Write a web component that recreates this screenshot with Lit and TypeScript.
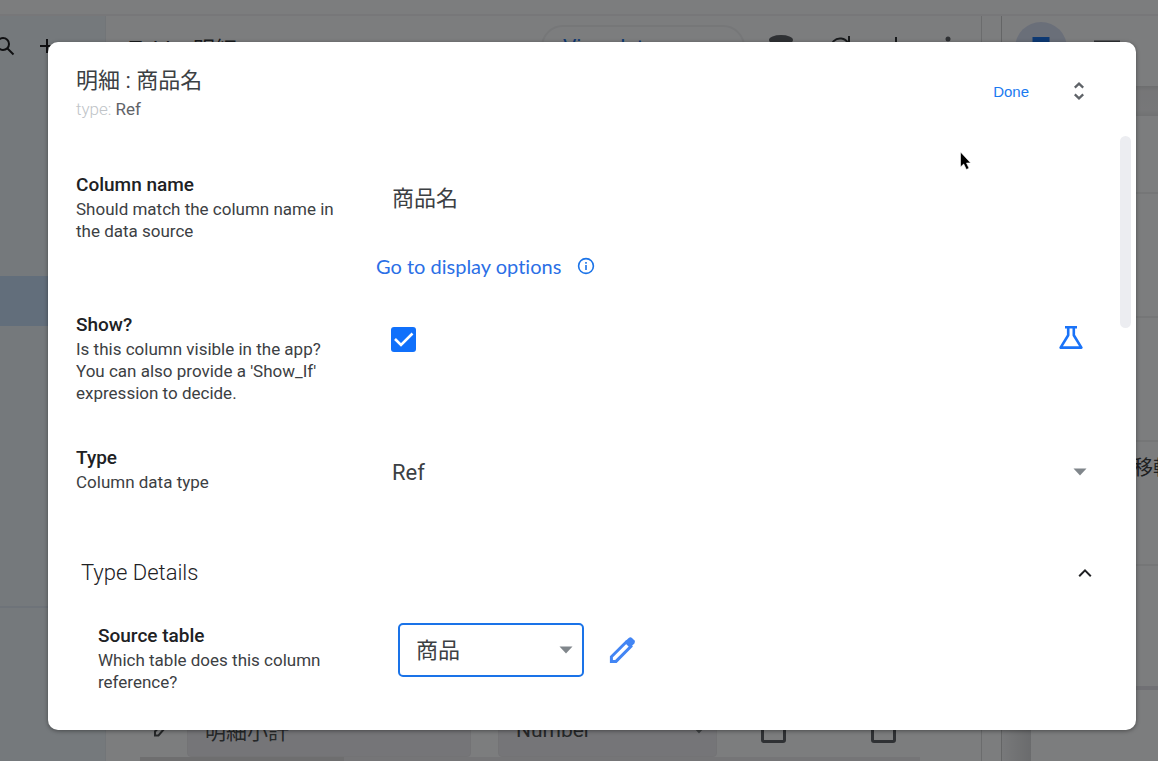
import { LitElement, html, css, svg } from "lit";
import { customElement, property } from "lit/decorators.js";

const baseText = css`
  :host {
    font-family: Roboto, "Noto Sans CJK JP", sans-serif;
    color: #202124;
    box-sizing: border-box;
  }
  *,
  *::before {
    box-sizing: border-box;
  }
  svg {
    display: block;
    fill: none;
    stroke: currentColor;
  }
  button,
  select,
  input {
    font: inherit;
    color: inherit;
    background: none;
    border: 0;
    margin: 0;
    padding: 0;
  }
`;

const caret = html`<svg class="caret" width="14" height="8" viewBox="0 0 14 8" aria-hidden="true">
  ${svg`<path d="M0.5 0.5h13L7 7.5z" fill="#80868b" stroke="none"/>`}
</svg>`;

@customElement("editor-backdrop")
class EditorBackdrop extends LitElement {
  static styles = [
    baseText,
    css`
      :host {
        display: grid;
        grid-template-rows: 16px 1fr;
        height: 100%;
        background: #f8fafd;
        overflow: hidden;
      }
      .topbar {
        border-bottom: 2px solid #eeeff2;
      }
      .columns {
        display: grid;
        grid-template-columns: 106px 1fr 157px;
        min-height: 0;
      }
      .sidebar {
        background: #eaf3f8;
        border-right: 1px solid #e4ebf0;
      }
      .tools {
        display: flex;
        gap: 18px;
        height: 60px;
        align-items: center;
        margin-left: -7px;
      }
      .current {
        height: 50px;
        margin-top: 200px;
        background: #c4dcf6;
      }
      .rule {
        margin-top: 280px;
        border-top: 2px solid #dce6f2;
      }
      .main {
        display: flex;
        flex-direction: column;
        justify-content: space-between;
        margin-right: 19px;
        border-right: 1px solid #d6d8da;
        min-width: 0;
      }
      .bar {
        display: flex;
        align-items: center;
        height: 62px;
        padding: 0 25px 0 23px;
        font-size: 22px;
        color: #33373b;
      }
      .name {
        flex: 1;
      }
      .pill {
        width: 204px;
        height: 44px;
        border: 2px solid #eceef1;
        border-radius: 22px;
        color: #1a73e8;
        text-align: left;
        font-size: 21px;
        padding-left: 20px;
        margin-right: 21px;
      }
      .icons {
        display: flex;
        gap: 32px;
        align-items: center;
      }
      .row {
        display: flex;
        align-items: center;
        height: 54px;
        padding-left: 44px;
        font-size: 21px;
        color: #4c5053;
      }
      .cell {
        display: flex;
        align-items: center;
        justify-content: space-between;
        height: 54px;
        padding: 0 10px 0 17px;
        border-radius: 4px;
        background: #ebebf0;
        border: 1px solid #e6e6eb;
      }
      .wide {
        width: 285px;
        margin: 0 27px 0 17px;
      }
      .narrow {
        width: 220px;
        margin-right: 44px;
      }
      .tick {
        appearance: none;
        width: 25px;
        height: 25px;
        border: 3px solid #5f6368;
        border-radius: 3px;
        margin-right: 85px;
      }
      .next {
        width: 780px;
        height: 4px;
        margin-left: 34px;
        background: linear-gradient(to right, #dcdcdf 204px, #ebebee 204px);
      }
      .preview {
        border-left: 1px solid #c9cbcd;
        min-width: 0;
        overflow: hidden;
      }
      .modes {
        display: flex;
        gap: 27px;
        align-items: center;
        height: 70px;
        padding: 0 0 6px 13px;
      }
      .mode {
        display: grid;
        place-items: center;
        flex: none;
        width: 52px;
        height: 52px;
        border-radius: 50%;
        background: #d5def3;
        color: #1a73e8;
      }
      .phone {
        padding-left: 29px;
        background: linear-gradient(to right, #f0f2f5, #d5d7da 29px, transparent 29px);
      }
      .band {
        height: 30px;
        background: linear-gradient(#dadbdd, #ececef 5px, #eeeff2 24px, #e2e3e6);
      }
      .item {
        height: 124px;
        border-bottom: 2px solid #ebecef;
        padding: 10px 0 0 102px;
        font-size: 20px;
        color: #3c4043;
        white-space: nowrap;
      }
      .first {
        height: 78px;
      }
      .last {
        border-bottom: 4px solid #e0e0e8;
      }
    `,
  ];

  render() {
    return html`
      <div class="topbar"></div>
      <div class="columns">
        <div class="sidebar">
          <div class="tools">
            <svg width="24" height="24" viewBox="0 0 24 24" stroke-width="2">
              ${svg`<circle cx="10" cy="10" r="6"/><path d="M14.5 14.5l6 6"/>`}
            </svg>
            <svg width="24" height="24" viewBox="0 0 24 24" stroke-width="2">
              ${svg`<path d="M12 5v14M5 12h14"/>`}
            </svg>
          </div>
          <div class="current"></div>
          <div class="rule"></div>
        </div>
        <div class="main">
          <div class="bar">
            <span class="name">Table: 明細</span>
            <button class="pill" tabindex="-1">View data</button>
            <div class="icons">
              <svg width="30" height="26" viewBox="0 0 30 26">
                ${svg`<ellipse cx="15" cy="6" rx="12" ry="5" fill="#5f6368" stroke="none"/><path d="M4 8v12c0 6 22 6 22 0V8" stroke-width="2"/>`}
              </svg>
              <svg width="24" height="26" viewBox="0 0 24 26" stroke-width="2">
                ${svg`<path d="M20 9a9 9 0 1 0 1 6M21 2v8h-7"/>`}
              </svg>
              <svg width="24" height="26" viewBox="0 0 24 26" stroke-width="2">
                ${svg`<path d="M12 3v20M2 13h20"/>`}
              </svg>
              <svg width="16" height="26" viewBox="0 0 16 26">
                ${svg`<g fill="#5f6368" stroke="none"><circle cx="8" cy="5" r="2.500"/><circle cx="8" cy="13" r="2.500"/><circle cx="8" cy="21" r="2.500"/></g>`}
              </svg>
            </div>
          </div>
          <div>
            <div class="row">
              <svg width="20" height="20" viewBox="0 0 20 20" stroke-width="2">
                ${svg`<path d="M5 15.500v-4L15 1.500l3 3-9.500 11z"/>`}
              </svg>
              <div class="cell wide">明細小計</div>
              <div class="cell narrow">Number ${caret}</div>
              <input class="tick" type="checkbox" aria-label="Key" tabindex="-1" />
              <input class="tick" type="checkbox" aria-label="Label" tabindex="-1" />
            </div>
            <div class="next"></div>
          </div>
        </div>
        <div class="preview">
          <div class="modes">
            <span class="mode">
              <svg width="18" height="24" viewBox="0 0 18 24" stroke-width="3">
                ${svg`<path d="M2 2.500h14v19H2z"/><path d="M2 4h14" stroke-width="4"/>`}
              </svg>
            </span>
            <svg width="26" height="18" viewBox="0 0 26 18" stroke-width="3" color="#5f6368">
              ${svg`<path d="M1.500 3h23v13h-23z"/>`}
            </svg>
          </div>
          <div class="band"></div>
          <div class="phone">
            <div class="item first"></div>
            <div class="item"></div>
            <div class="item"></div>
            <div class="item">移転</div>
            <div class="item last"></div>
            <div class="item"></div>
          </div>
        </div>
      </div>
    `;
  }
}

@customElement("field-row")
class FieldRow extends LitElement {
  @property() name = "";
  @property() hint = "";
  static styles = [
    baseText,
    css`
      :host {
        display: grid;
        grid-template-columns: 270px 1fr;
        column-gap: 30px;
        min-height: 103px;
        align-items: start;
      }
      .name {
        font-size: 19px;
        line-height: 26px;
        font-weight: 500;
        margin: 0;
      }
      .hint {
        font-size: 17px;
        line-height: 22px;
        color: #3c4043;
        margin: 0;
      }
    `,
  ];
  render() {
    return html`
      <div>
        <h3 class="name">${this.name}</h3>
        <p class="hint">${this.hint}</p>
      </div>
      <slot></slot>
    `;
  }
}

@customElement("app-root")
class AppRoot extends LitElement {
  static styles = [
    baseText,
    css`
      :host {
        display: block;
        position: relative;
        height: 100vh;
        overflow: hidden;
      }
      .scrim {
        position: absolute;
        inset: 0;
        background: rgba(0, 0, 0, 0.5);
      }
      .dialog {
        position: absolute;
        inset: 42px 22px 31px 48px;
        display: flex;
        flex-direction: column;
        background: #fff;
        border-radius: 10px;
        box-shadow: 0 1px 4px rgba(0, 0, 0, 0.4);
        overflow: hidden;
      }
      .head {
        display: flex;
        align-items: flex-start;
        padding: 24px 45px 16px 28px;
      }
      .titles {
        flex: 1;
      }
      .title {
        font-size: 22px;
        line-height: 30px;
        font-weight: 400;
        color: #3c4043;
        margin: 0 0 2px;
      }
      .kind {
        font-size: 17px;
        line-height: 22px;
        margin: 0;
        color: #5f6368;
      }
      .muted {
        color: #c0c4c8;
        font-weight: 300;
      }
      .done {
        font-family: "Liberation Sans", sans-serif;
        font-size: 15px;
        color: #1a7af0;
        height: 50px;
        padding: 0 8px;
        margin-right: 30px;
      }
      .expand {
        height: 50px;
        color: #5f6368;
      }
      .body {
        position: relative;
        flex: 1;
        min-height: 0;
        overflow: hidden;
        padding: 36px 44px 0 28px;
      }
      .thumb {
        position: absolute;
        top: 0;
        right: 5px;
        width: 11px;
        height: 192px;
        border-radius: 6px;
        background: #ecedf1;
      }
      .fields {
        display: flex;
        flex-direction: column;
        gap: 30px;
      }
      .text,
      .pick {
        display: block;
        width: 100%;
        height: 54px;
        padding: 0 16px;
        font-size: 22px;
        color: #3c4043;
        appearance: none;
        outline: 0;
      }
      .text {
        height: 48px;
      }
      .options {
        display: flex;
        align-items: center;
        gap: 16px;
        height: 32px;
        margin-top: 30px;
        color: #1a73e8;
      }
      .link {
        font-family: Lato, sans-serif;
        font-variant-ligatures: none;
        font-size: 20px;
        line-height: 24px;
        color: #2b6fe6;
        text-decoration: none;
      }
      .line {
        display: flex;
        align-items: center;
        justify-content: space-between;
        height: 54px;
        padding: 0 8px 0 15px;
      }
      .check {
        display: grid;
        place-items: center;
        width: 25px;
        height: 25px;
        appearance: none;
        border-radius: 3px;
        border: 2px solid #5f6368;
      }
      .check:checked {
        border: 0;
        background: #1070fb
          url("data:image/svg+xml,%3Csvg xmlns='http://www.w3.org/2000/svg' viewBox='0 0 25 25'%3E%3Cpath d='M4 12l6 6L21.500 6.500' fill='none' stroke='white' stroke-width='2.600'/%3E%3C/svg%3E");
      }
      .blue {
        color: #1a73f8;
      }
      .select {
        display: grid;
        align-items: center;
      }
      .select > * {
        grid-area: 1 / 1;
      }
      .caret {
        justify-self: end;
        margin-right: 5px;
        pointer-events: none;
      }
      .section {
        display: flex;
        align-items: center;
        justify-content: space-between;
        width: 100%;
        padding: 9px 0 34px 5px;
        font-size: 22px;
        line-height: 32px;
        font-weight: 300;
        color: #202124;
      }
      .nested {
        padding-left: 22px;
      }
      .source {
        display: flex;
        align-items: center;
        gap: 25px;
      }
      .boxed {
        width: 186px;
      }
      .boxed .pick {
        border: 2px solid #1a73e8;
        border-radius: 5px;
        color: #3c4043;
      }
      .boxed .caret {
        margin-right: 11px;
      }
      .pointer {
        position: absolute;
        left: 959px;
        top: 150px;
        pointer-events: none;
      }
    `,
  ];

  render() {
    return html`
      <editor-backdrop aria-hidden="true"></editor-backdrop>
      <div class="scrim"></div>
      <section class="dialog" role="dialog" aria-labelledby="title">
        <header class="head">
          <div class="titles">
            <h2 class="title" id="title">明細 : 商品名</h2>
            <p class="kind"><span class="muted">type:</span> Ref</p>
          </div>
          <button class="done">Done</button>
          <button class="expand" aria-label="Expand">
            <svg width="24" height="24" viewBox="0 0 24 24" stroke-width="2.300">
              ${svg`<path d="M7.800 8.600L12 4.600l4.200 4M7.800 15.400l4.200 4 4.200-4"/>`}
            </svg>
          </button>
        </header>
        <div class="body">
          <div class="fields">
            <field-row name="Column name" hint="Should match the column name in the data source">
              <div>
                <input class="text" aria-label="Column name" value="商品名" />
                <div class="options">
                  <a class="link" href="#display">Go to display options</a>
                  <svg width="18" height="18" viewBox="0 0 18 18" stroke-width="1.600">
                    ${svg`<circle cx="9" cy="9" r="7.400"/><path d="M9 8v5M9 5v1.800"/>`}
                  </svg>
                </div>
              </div>
            </field-row>
            <field-row
              name="Show?"
              hint="Is this column visible in the app? You can also provide a 'Show_If' expression to decide."
            >
              <div class="line">
                <input class="check" type="checkbox" aria-label="Show?" checked />
                <button class="blue" aria-label="Use an expression">
                  <svg width="26" height="28" viewBox="0 0 26 28" stroke-width="2.600">
                    ${svg`<path d="M7 2.200h12M10.200 2.200v8L2.600 22.600h20.800L15.800 10.200v-8" stroke-linejoin="round"/>`}
                  </svg>
                </button>
              </div>
            </field-row>
            <field-row name="Type" hint="Column data type">
              <div class="select">
                <select class="pick" aria-label="Type">
                  <option>Ref</option>
                </select>
                ${caret}
              </div>
            </field-row>
          </div>
          <button class="section" aria-expanded="true">
            Type Details
            <svg width="14" height="10" viewBox="0 0 14 10" stroke-width="2">
              ${svg`<path d="M1.200 8.200L7 2.400l5.800 5.800"/>`}
            </svg>
          </button>
          <div class="nested">
            <field-row name="Source table" hint="Which table does this column reference?">
              <div class="source">
                <div class="select boxed">
                  <select class="pick" aria-label="Source table">
                    <option>商品</option>
                  </select>
                  ${caret}
                </div>
                <button class="blue" aria-label="Edit source table">
                  <svg width="28" height="28" viewBox="0 0 28 28">
                    ${svg`<path d="M2.400 25.400v-4.600L17.200 6l4.600 4.600L7 25.400z" stroke="#4285f4" stroke-width="3"/><path d="M16 5.600l3.700-3.700q1.700-1.400 3.300 0l2.300 2.300q1.400 1.600 0 3.300l-3.700 3.700z" fill="#4285f4" stroke="none"/>`}
                  </svg>
                </button>
              </div>
            </field-row>
          </div>
          <div class="thumb"></div>
        </div>
      </section>
      <svg class="pointer" width="14" height="22" viewBox="0 0 14 22" aria-hidden="true">
        ${svg`<path d="M1.500 2v15l3.200-3 2.700 5.500 2.600-1.200-2.500-5.300h4.200z" fill="#000" stroke="#fff" stroke-width="0.600"/>`}
      </svg>
    `;
  }
}
